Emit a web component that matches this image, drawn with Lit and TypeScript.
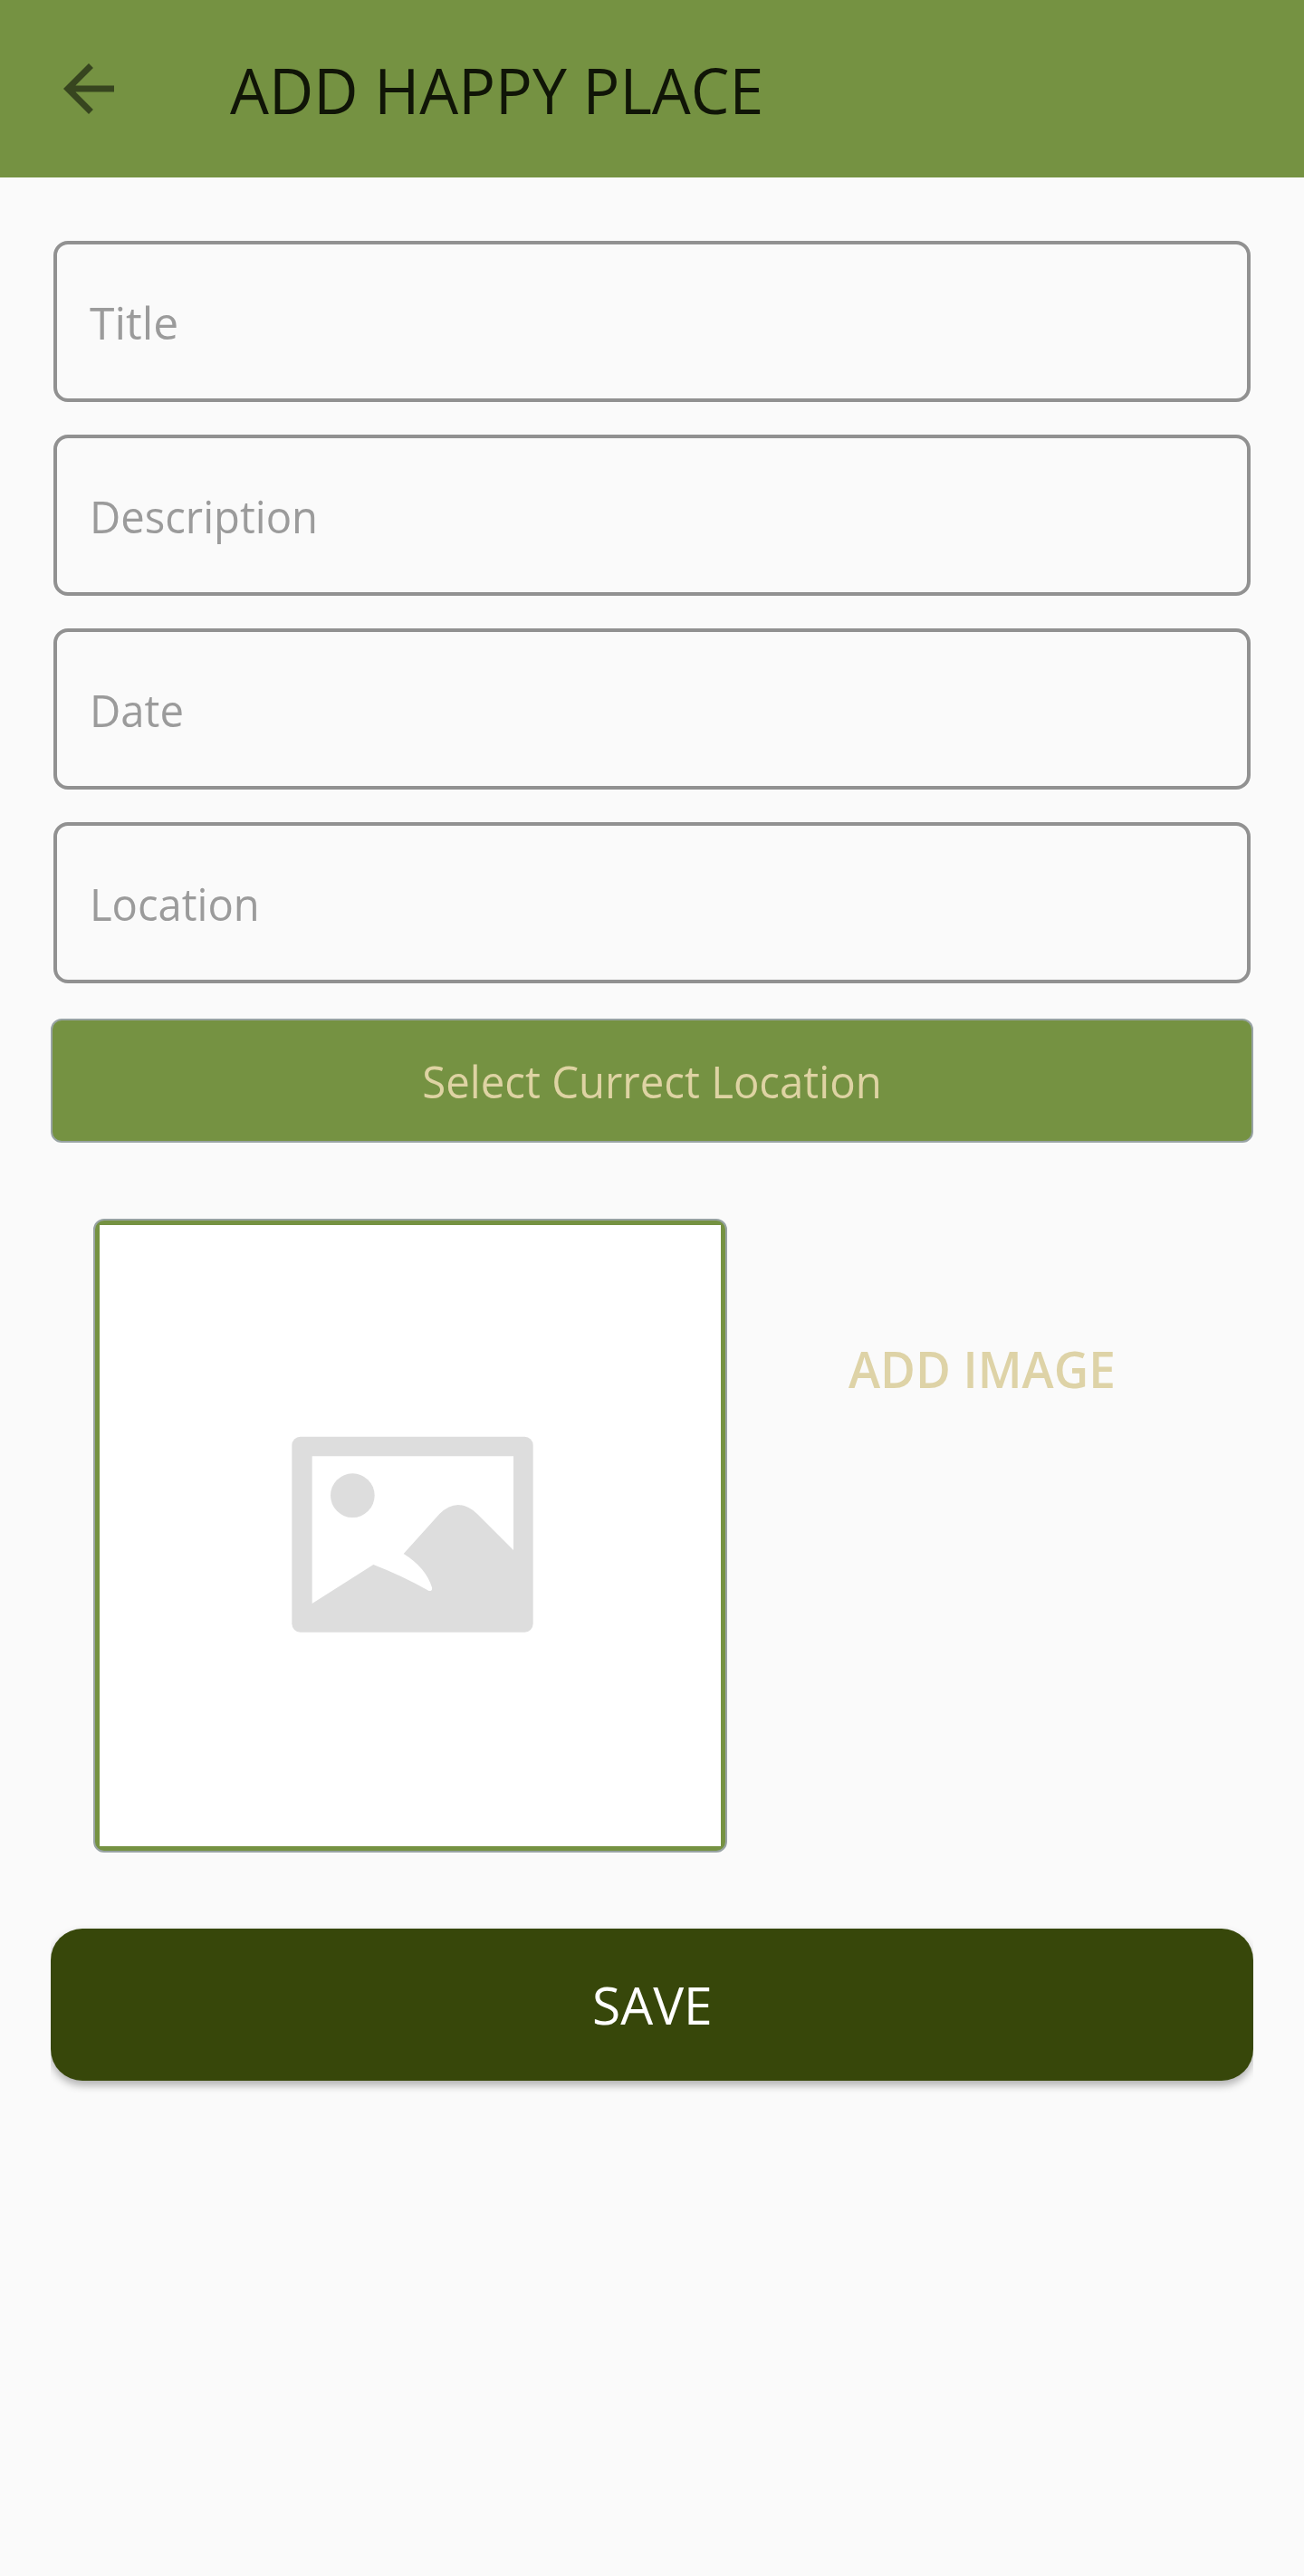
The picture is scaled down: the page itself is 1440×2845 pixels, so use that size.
import { LitElement, html, css } from "lit";
import { customElement, property } from "lit/decorators.js";

@customElement("outlined-field")
class OutlinedField extends LitElement {
  @property() label = "";
  @property({ type: Number }) stretch = 1;

  static styles = css`
    :host { display: block; }
    .field {
      box-sizing: border-box;
      height: 178px;
      border: 4px solid #919191;
      border-radius: 16px;
      padding: 2px 36px 0;
      display: flex;
      align-items: center;
      font-size: 50px;
      line-height: 68px;
      color: #9b9b9b;
    }
    .hint { transform-origin: 0 50%; white-space: nowrap; }
  `;

  render() {
    return html`<div class="field">
      <span class="hint" style="transform: scaleX(${this.stretch})">${this.label}</span>
    </div>`;
  }
}

@customElement("app-root")
class AppRoot extends LitElement {
  static styles = css`
    :host {
      display: block;
      min-height: 2845px;
      background: #fafafa;
      font-family: "Open Sans", "Noto Sans", sans-serif;
    }
    .bar {
      height: 196px;
      box-sizing: border-box;
      padding-left: 56px;
      display: flex;
      align-items: center;
      background: #759242;
    }
    .back { width: 84px; height: 84px; flex: none; display: block; }
    .heading {
      margin: 0 0 0 114px;
      padding-top: 1px;
      font-size: 69.6px;
      font-weight: 400;
      line-height: 96px;
      white-space: nowrap;
      color: #101507;
      transform: scaleX(0.976);
      transform-origin: 0 50%;
    }
    .form { padding: 70px 56px 0; }
    .fields { display: grid; gap: 36px; padding: 0 3px; }
    .btn {
      box-sizing: border-box;
      width: 100%;
      display: flex;
      align-items: center;
      justify-content: center;
      white-space: nowrap;
    }
    .locate {
      margin-top: 39px;
      height: 137px;
      border: 2px solid #98a3a3;
      border-radius: 12px;
      background: #759242;
      color: #ded3a3;
      font-size: 50px;
    }
    .locate span { transform: scaleX(0.947); }
    .media {
      display: flex;
      margin: 84px 0 0 47px;
    }
    .preview {
      box-sizing: border-box;
      flex: none;
      width: 700px;
      height: 700px;
      padding: 5px;
      border: 2px solid #98a3a3;
      border-radius: 12px;
      background: #759242;
    }
    .canvas {
      height: 100%;
      display: flex;
      align-items: center;
      justify-content: center;
      background: #fff;
    }
    .placeholder { width: 270px; height: 220px; display: block; }
    .add {
      margin: 127px 0 0 134px;
      font-size: 56px;
      line-height: 76px;
      height: 76px;
      font-weight: 600;
      color: #ded3a7;
      white-space: nowrap;
      transform: scaleX(0.947);
      transform-origin: 0 50%;
    }
    .save {
      margin-top: 84px;
      height: 168px;
      border-radius: 35px;
      background: #37470a;
      color: #fff;
      font-size: 56px;
      box-shadow: 0 5px 10px rgba(0, 0, 0, 0.3);
      clip-path: inset(-4px 0 -24px 0);
    }
    .save span { transform: scaleX(1.015); }
  `;

  private fields = [
    { label: "Title", stretch: 0.995 },
    { label: "Description", stretch: 0.944 },
    { label: "Date", stretch: 0.945 },
    { label: "Location", stretch: 0.943 },
  ];

  render() {
    return html`
      <header class="bar">
        <svg class="back" viewBox="0 0 24 24" fill="#37451f">
          <path d="M20 11H7.83l5.59-5.59L12 4l-8 8 8 8 1.41-1.41L7.83 13H20v-2z" />
        </svg>
        <h1 class="heading">ADD HAPPY PLACE</h1>
      </header>
      <main class="form">
        <div class="fields">
          ${this.fields.map(
            (f) => html`<outlined-field .label=${f.label} .stretch=${f.stretch}></outlined-field>`
          )}
        </div>
        <div class="btn locate"><span>Select Currect Location</span></div>
        <section class="media">
          <div class="preview">
            <div class="canvas">
              <svg class="placeholder" viewBox="53 78 810 660" overflow="visible">
                <rect x="66" y="80" width="799" height="648" rx="28" fill="#ddd" />
                <path
                  fill="#fff"
                  d="M133 145H800V456L680 336Q616 276 555 336L436 468Q510 514 530 580Q532 592 520 591Q430 540 336 504L133 633Z"
                />
                <circle cx="267" cy="275" r="73" fill="#ddd" />
              </svg>
            </div>
          </div>
          <div class="add">ADD IMAGE</div>
        </section>
        <div class="btn save"><span>SAVE</span></div>
      </main>
    `;
  }
}
